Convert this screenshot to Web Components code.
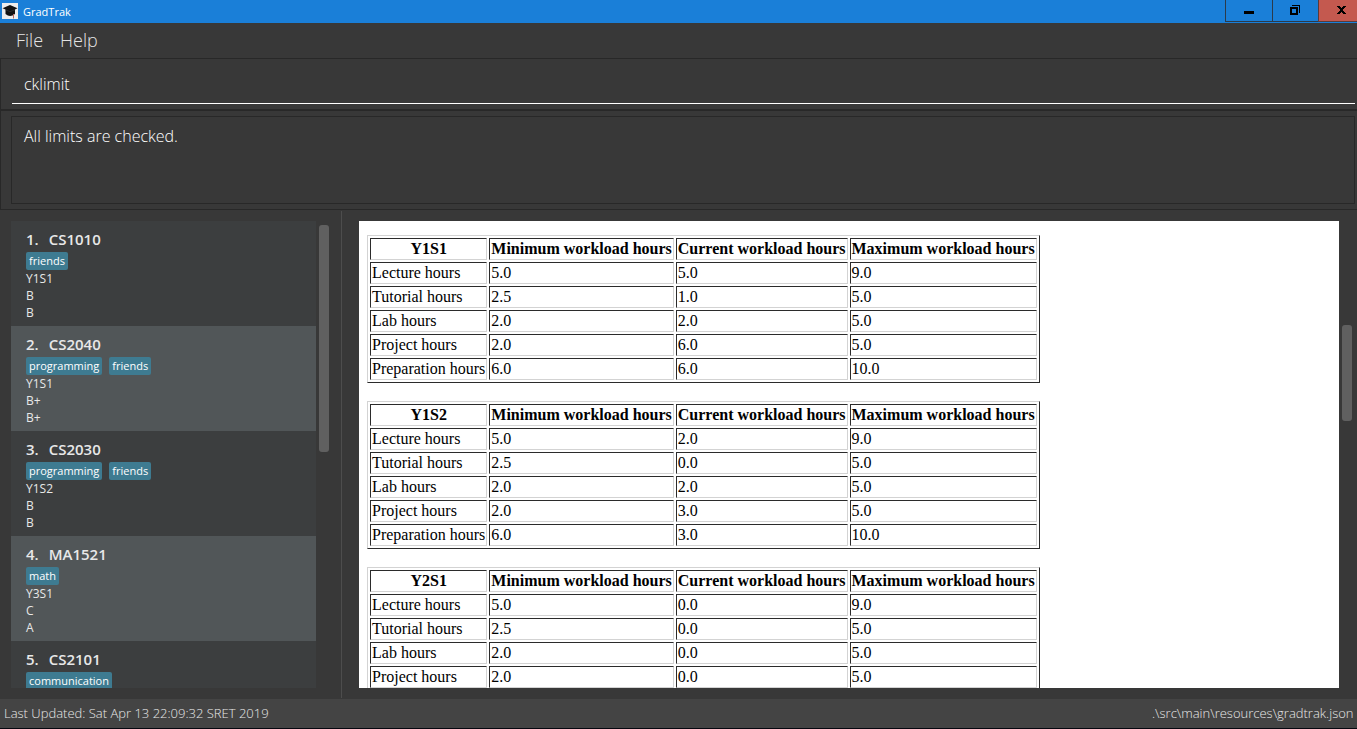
<!DOCTYPE html>
<html lang="en">
<head>
<meta charset="utf-8">
<title>GradTrak</title>
<style>
  html, body { height: 100%; margin: 0; }
  body { background: #383838; font-family: "Open Sans", "Noto Sans", sans-serif; color: #fff; overflow: hidden; }
</style>
</head>
<body>
<grad-app></grad-app>

<template id="grad-app">
  <style>
    :host { display: flex; flex-direction: column; height: 100vh; box-sizing: border-box; border-bottom: 1px solid #05070f; }
    main { flex: 1; min-height: 0; display: flex; }
    .modules { flex: 0 0 341px; box-sizing: border-box; padding: 11px 12px 11px 11px; display: flex; }
    .divider { flex: 0 0 1px; margin: 1px 0; background: #4d4d4d; }
    .report { flex: 1; min-width: 0; padding: 11px 5px 11px 17px; display: flex; }
    scroll-pane { flex: 1; min-width: 0; }
    .modules scroll-pane { --thumb-before: 4px; --thumb-size: 227px; }
    .report scroll-pane { --pane: #fff; --thumb-before: 104px; --thumb-size: 96px; }
    ul { list-style: none; margin: 0; padding: 0; }
    .page { padding: 14px 8px; display: flex; flex-direction: column; align-items: flex-start; gap: 18px; }
  </style>
  <title-bar>GradTrak</title-bar>
  <menu-bar></menu-bar>
  <command-box></command-box>
  <result-box>All limits are checked.</result-box>
  <main>
    <section class="modules" aria-label="Modules"><scroll-pane><ul></ul></scroll-pane></section>
    <div class="divider"></div>
    <section class="report" aria-label="Workload limits"><scroll-pane><div class="page"></div></scroll-pane></section>
  </main>
  <status-bar>
    <span slot="saved">Last Updated: Sat Apr 13 22:09:32 SRET 2019</span>
    <span slot="file">.\src\main\resources\gradtrak.json</span>
  </status-bar>
</template>

<template id="title-bar">
  <style>
    :host { display: flex; height: 23px; flex: none; background: #1a7fd8; font-size: 11px; line-height: 23px; }
    .icon { width: 16px; height: 16px; margin: 3px 5px 0 2px; }
    .name { flex: 1; }
    .buttons { display: flex; height: 22px; }
    button { box-sizing: border-box; width: 47px; padding: 0; margin: 0; border: solid #2b3a4a; border-width: 0 0 1px 1px; background: none; display: flex; align-items: center; justify-content: center; }
    button.max { width: 46px; padding: 0 2px 2px 0; }
    button.close { width: 39px; background: #c4594f; border-color: #5a3a3a; padding: 0 0 2px 6px; }
    button svg { display: block; }
  </style>
  <svg class="icon" viewBox="0 0 16 16" aria-hidden="true">
    <rect width="16" height="16" fill="#ececec"/>
    <path d="M8 2 15.500 5.200 13 6.600V11Q8 14.800 3.500 11V6.600L.5 5.200Z" fill="#111"/>
    <path d="M3.500 6.800 8 8.600 13 6.800" fill="none" stroke="#3a3a3a" stroke-width=".6"/>
    <path d="M11.500 11V15.500" stroke="#b5675f"/>
  </svg>
  <span class="name"><slot></slot></span>
  <div class="buttons">
    <button aria-label="Minimize"><svg width="10" height="13" viewBox="0 0 10 13"><path d="M0 7h10v3H0z"/></svg></button>
    <button class="max" aria-label="Restore"><svg width="10" height="10" viewBox="0 0 10 10"><path d="M0 2h8v8H0zM2 4v4h4V4z" fill-rule="evenodd"/><path d="M2 0h8v8H9V1H2z"/></svg></button>
    <button class="close" aria-label="Close"><svg width="9" height="8" viewBox="0 0 9 8"><path d="M0 0h3v1h1v1h1V1h1V0h3v1H8v1H7v1H6v2h1v1h1v1h1v1H6V7H5V6H4v1H3v1H0V7h1V6h1V5h1V3H2V2H1V1H0z"/></svg></button>
  </div>
</template>

<template id="menu-bar">
  <style>
    :host { display: flex; flex: none; height: 35px; padding-left: 16px; gap: 17px; }
    button { font: 300 18px/35px "Open Sans", "Noto Sans", sans-serif; color: #e4e4e4; background: none; border: 0; padding: 0; }
  </style>
  <button>File</button><button>Help</button>
</template>

<template id="command-box">
  <style>
    :host { display: block; flex: none; box-sizing: border-box; height: 52px; padding: 9px 2px 0 11px; border: 1px solid #282828; border-right: 0; }
    input { display: block; box-sizing: border-box; width: 100%; height: 36px; margin: 0; padding: 0 12px 4px; border: 0; border-bottom: 1px solid #fff; background: none; outline: 0; color: #fff; font: 300 16px/24px "Open Sans", "Noto Sans", sans-serif; }
  </style>
  <input type="text" aria-label="Command" value="cklimit">
</template>

<template id="result-box">
  <style>
    :host { display: block; flex: none; box-sizing: border-box; height: 100px; padding: 5px 2px 5px 10px; border: 1px solid #282828; border-right: 0; }
    output { display: block; box-sizing: border-box; height: 88px; padding: 7px 12px; border: 1px solid #282828; font-size: 16px; font-weight: 300; line-height: 24px; }
  </style>
  <output><slot></slot></output>
</template>

<template id="scroll-pane">
  <style>
    :host { display: flex; gap: 3px; min-height: 0; }
    .view { flex: 1; min-width: 0; overflow: hidden; background: var(--pane, #3c3e3f); }
    .track { flex: 0 0 10px; }
    .track::before { content: ""; display: block; height: var(--thumb-before); }
    .thumb { height: var(--thumb-size); border-radius: 3px; background: #606060; }
  </style>
  <div class="view"><slot></slot></div>
  <div class="track"><div class="thumb"></div></div>
</template>

<template id="module-card">
  <style>
    :host { display: block; box-sizing: border-box; height: 105px; padding: 8px 15px 5px; background: #3c3e3f; color: #e8e8e8; font-size: 12px; line-height: 17px; }
    :host([alternate]) { background: #515658; }
    h2 { display: flex; gap: 10px; margin: 0 0 3px; font-size: 15px; font-weight: 600; line-height: 20px; }
    .tags { display: flex; gap: 7px; }
    .tags span { padding: 0 3px; border-radius: 2px; background: #3e7b91; color: #fff; font-size: 11px; line-height: 18px; }
  </style>
  <h2><span class="index"></span><span class="code"></span></h2>
  <div class="tags"></div>
  <div class="semester"></div>
  <div class="low"></div>
  <div class="high"></div>
</template>

<template id="workload-table">
  <style>
    :host { display: block; font-family: "Liberation Serif", serif; font-size: 16px; line-height: 18px; color: #000; }
    table { border: 1px solid; border-color: #d3d3d3 #2b2b2b #2b2b2b #d3d3d3; border-spacing: 2px; }
    th, td { padding: 1px; border: 1px solid; border-color: #2b2b2b #d3d3d3 #d3d3d3 #2b2b2b; white-space: nowrap; }
  </style>
  <table>
    <thead><tr><th scope="col"></th><th scope="col">Minimum workload hours</th><th scope="col">Current workload hours</th><th scope="col">Maximum workload hours</th></tr></thead>
    <tbody></tbody>
  </table>
</template>

<template id="status-bar">
  <style>
    :host { display: flex; flex: none; height: 29px; justify-content: space-between; padding-left: 4px; background: #444; color: #e8e8e8; font-size: 13px; font-weight: 300; line-height: 29px; white-space: nowrap; }
    .file { flex: 0 0 205px; }
  </style>
  <div><slot name="saved"></slot></div>
  <div class="file"><slot name="file"></slot></div>
</template>

<script>
  class TemplateElement extends HTMLElement {
    constructor() {
      super();
      this.attachShadow({ mode: "open" })
        .append(document.getElementById(this.localName).content.cloneNode(true));
    }
    $(selector) { return this.shadowRoot.querySelector(selector); }
  }

  class ModuleCard extends TemplateElement {
    set module({ index, code, tags, semester, low, high }) {
      this.$(".index").textContent = index + ".";
      this.$(".code").textContent = code;
      this.$(".semester").textContent = semester;
      this.$(".low").textContent = low;
      this.$(".high").textContent = high;
      this.$(".tags").replaceChildren(...tags.map(tag => {
        const label = document.createElement("span");
        label.textContent = tag;
        return label;
      }));
      this.toggleAttribute("alternate", index % 2 === 0);
    }
  }

  class WorkloadTable extends TemplateElement {
    set semester({ name, current }) {
      this.$("th").textContent = name;
      const limits = [["Lecture", "5.0", "9.0"], ["Tutorial", "2.5", "5.0"], ["Lab", "2.0", "5.0"], ["Project", "2.0", "5.0"], ["Preparation", "6.0", "10.0"]];
      limits.forEach(([kind, min, max], i) => {
        const row = this.$("tbody").insertRow();
        for (const text of [kind + " hours", min, current[i], max]) row.insertCell().textContent = text;
      });
    }
  }

  class GradApp extends TemplateElement {
    connectedCallback() {
      const modules = [
        ["CS1010", ["friends"], "Y1S1", "B", "B"],
        ["CS2040", ["programming", "friends"], "Y1S1", "B+", "B+"],
        ["CS2030", ["programming", "friends"], "Y1S2", "B", "B"],
        ["MA1521", ["math"], "Y3S1", "C", "A"],
        ["CS2101", ["communication"], "", "", ""]
      ];
      modules.forEach(([code, tags, semester, low, high], i) => {
        const item = document.createElement("li");
        const card = document.createElement("module-card");
        card.module = { index: i + 1, code, tags, semester, low, high };
        item.append(card);
        this.$("ul").append(item);
      });
      const semesters = [
        ["Y1S1", ["5.0", "1.0", "2.0", "6.0", "6.0"]],
        ["Y1S2", ["2.0", "0.0", "2.0", "3.0", "3.0"]],
        ["Y2S1", ["0.0", "0.0", "0.0", "0.0", "0.0"]]
      ];
      for (const [name, current] of semesters) {
        const table = document.createElement("workload-table");
        table.semester = { name, current };
        this.$(".page").append(table);
      }
    }
  }

  for (const name of ["title-bar", "menu-bar", "command-box", "result-box", "scroll-pane", "status-bar"])
    customElements.define(name, class extends TemplateElement {});
  customElements.define("module-card", ModuleCard);
  customElements.define("workload-table", WorkloadTable);
  customElements.define("grad-app", GradApp);
</script>
</body>
</html>
